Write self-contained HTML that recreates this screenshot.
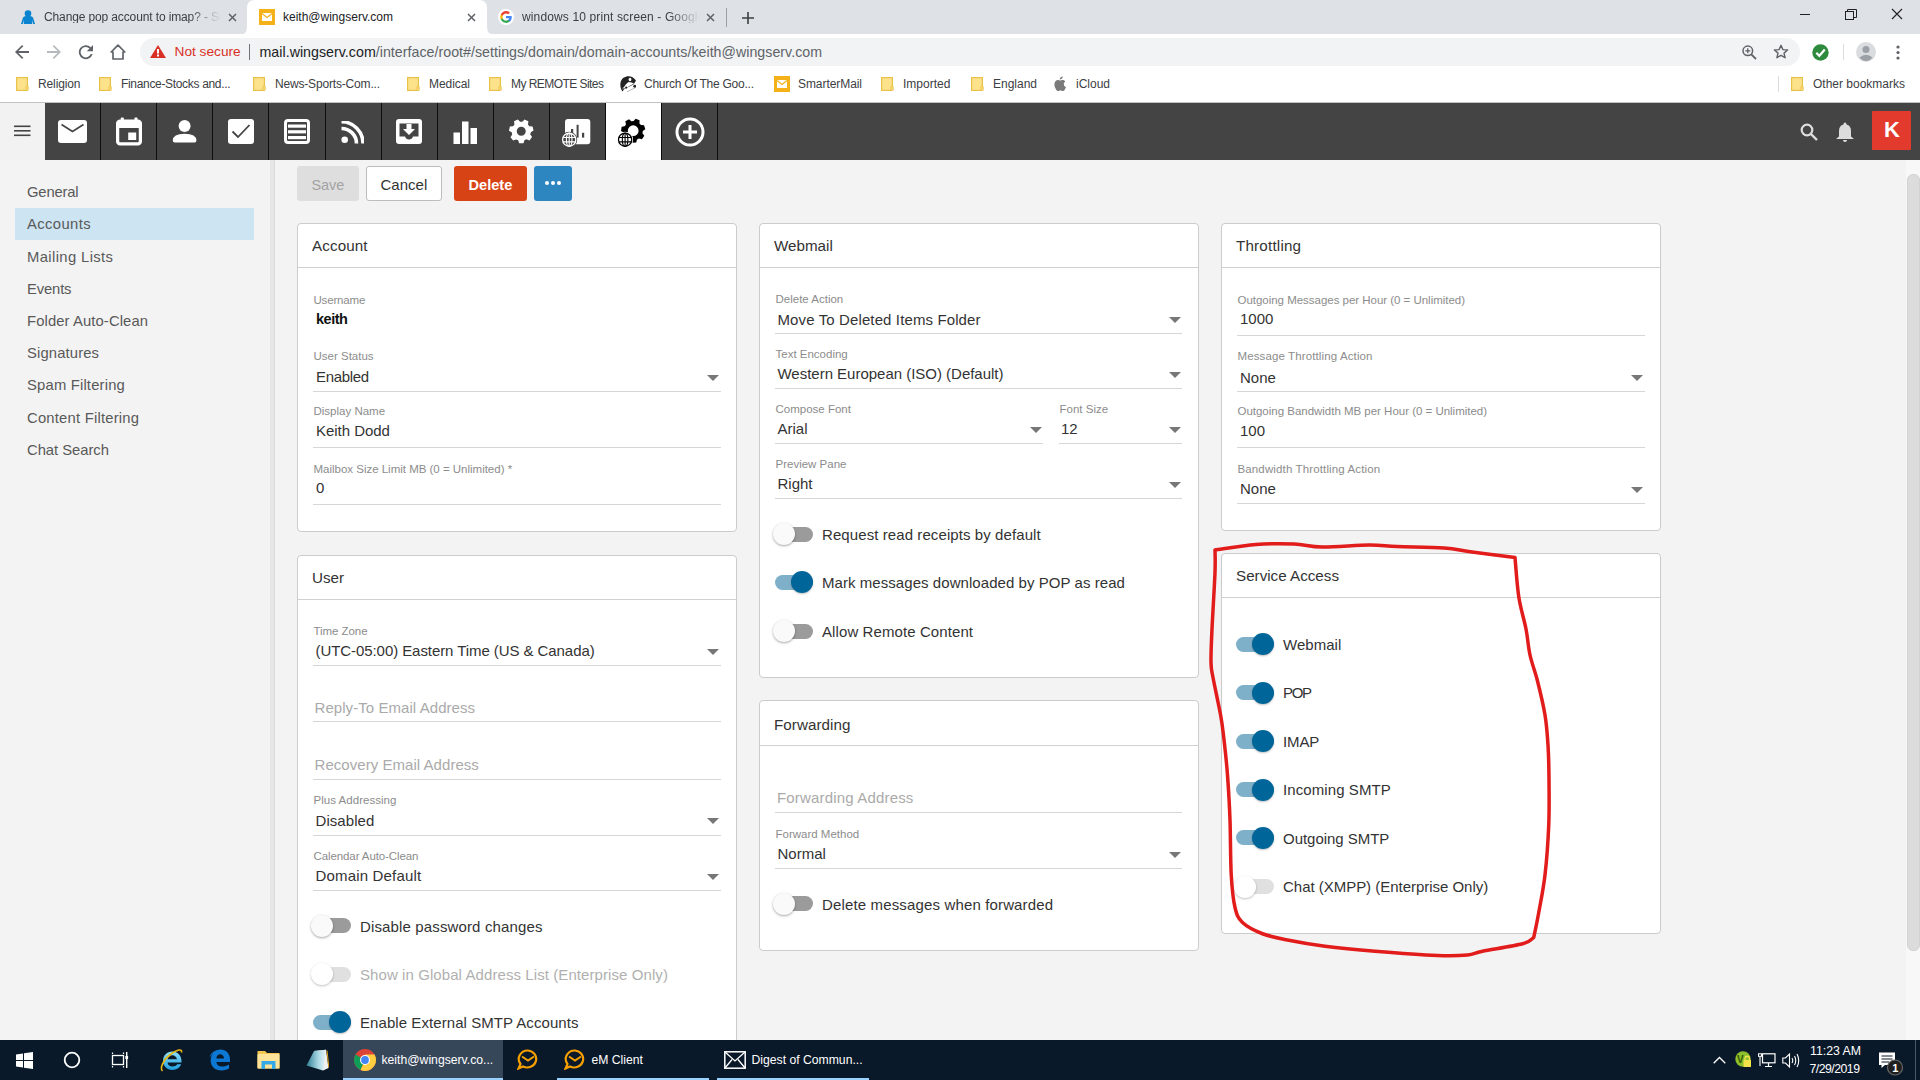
<!DOCTYPE html>
<html><head><meta charset="utf-8"><title>SmarterMail</title>
<style>
html,body{margin:0;padding:0;width:1920px;height:1080px;overflow:hidden;background:#fff}
body{position:relative;font-family:"Liberation Sans", sans-serif}
.t{position:absolute;line-height:1;white-space:nowrap;font-family:"Liberation Sans", sans-serif}
.r{position:absolute;display:block}
</style></head><body>
<div class="r" style="left:0px;top:0px;width:1920px;height:34px;background:#dee1e6"></div>
<svg class="r" style="left:239px;top:0" width="256" height="35" viewBox="0 0 256 35"><path d="M0 35 Q8 35 8 27 L8 8 Q8 0 16 0 L240 0 Q248 0 248 8 L248 27 Q248 35 256 35 Z" fill="#fff"/></svg>
<div class="r" style="left:0px;top:34px;width:1920px;height:68px;background:#fff"></div>
<svg class="r" style="left:20px;top:10px" width="16" height="14" viewBox="0 0 16 14"><circle cx="8" cy="3.5" r="3.3" fill="#0a84d0"/><path d="M1 14 L3 7.5 Q4 6 6 6 L10 6 Q12 6 13 7.5 L15 14 L13 14 L12 10 L12 14 L4 14 L4 10 L3 14Z" fill="#0a84d0"/></svg>
<div class="t" style="left:44px;top:10.84px;font-size:12px;color:#3c4043;font-weight:400;letter-spacing:-0.127px;width:177px;overflow:hidden;-webkit-mask-image:linear-gradient(90deg,#000 82%,transparent 100%)">Change pop account to imap? - Super User</div>
<svg class="r" style="left:228px;top:13px" width="9" height="9" viewBox="0 0 9 9"><path d="M1 1L8 8M8 1L1 8" stroke="#5f6368" stroke-width="1.5"/></svg>
<svg class="r" style="left:259px;top:9px" width="16" height="16" viewBox="0 0 16 16"><rect width="16" height="16" fill="#f5b11a"/><rect x="3" y="4" width="10" height="8" fill="#fff"/><path d="M3 4.5L8 8.5L13 4.5" stroke="#f5b11a" stroke-width="1.2" fill="none"/></svg>
<div class="t" style="left:283px;top:10.84px;font-size:12px;color:#202124;font-weight:400;">keith@wingserv.com</div>
<svg class="r" style="left:467px;top:13px" width="9" height="9" viewBox="0 0 9 9"><path d="M1 1L8 8M8 1L1 8" stroke="#5f6368" stroke-width="1.5"/></svg>
<svg class="r" style="left:498px;top:9px" width="16" height="16" viewBox="0 0 16 16"><circle cx="8" cy="8" r="8" fill="#fff"/><g transform="translate(1.85 1.85) scale(0.82)"><path d="M14.5 7.7c0-.5 0-1-.1-1.4H7.5v2.7h3.9c-.2.9-.7 1.7-1.4 2.2v1.8h2.3c1.4-1.3 2.2-3.1 2.2-5.3z" fill="#4285f4"/><path d="M7.5 14.7c1.9 0 3.5-.6 4.7-1.7L9.9 11.2c-.6.4-1.4.7-2.4.7-1.9 0-3.4-1.3-4-3H1.2v1.8c1.2 2.4 3.6 4 6.3 4z" fill="#34a853"/><path d="M3.5 8.9c-.2-.4-.2-.9-.2-1.4s.1-1 .2-1.4V4.3H1.2C.7 5.3.4 6.4.4 7.5s.3 2.2.8 3.2l2.3-1.8z" fill="#fbbc05"/><path d="M7.5 3.1c1.1 0 2 .4 2.8 1.1l2-2C11 .9 9.4.3 7.5.3 4.8.3 2.4 1.9 1.2 4.3l2.3 1.8c.6-1.8 2.1-3 4-3z" fill="#ea4335"/></g></svg>
<div class="t" style="left:522px;top:10.84px;font-size:12px;color:#3c4043;font-weight:400;letter-spacing:0.134px;width:178px;overflow:hidden;-webkit-mask-image:linear-gradient(90deg,#000 82%,transparent 100%)">windows 10 print screen - Google Search</div>
<svg class="r" style="left:706px;top:13px" width="9" height="9" viewBox="0 0 9 9"><path d="M1 1L8 8M8 1L1 8" stroke="#5f6368" stroke-width="1.5"/></svg>
<div class="r" style="left:726px;top:8px;width:1px;height:19px;background:#9aa0a6"></div>
<svg class="r" style="left:742px;top:12px" width="12" height="12" viewBox="0 0 12 12"><path d="M6 0V12M0 6H12" stroke="#3c4043" stroke-width="1.6"/></svg>
<div class="r" style="left:1800px;top:14px;width:10px;height:1px;background:#202124"></div>
<svg class="r" style="left:1845px;top:9px" width="12" height="11" viewBox="0 0 12 11"><rect x="0.5" y="2.5" width="8" height="8" fill="none" stroke="#202124"/><path d="M2.5 2.5V0.5H11.5V8.5H8.5" fill="none" stroke="#202124"/></svg>
<svg class="r" style="left:1891px;top:8px" width="12" height="12" viewBox="0 0 12 12"><path d="M1 1L11 11M11 1L1 11" stroke="#202124" stroke-width="1.1"/></svg>
<svg class="r" style="left:15px;top:45px" width="14" height="14" viewBox="0 0 14 14"><path d="M14 6.1H3.4L8.3 1.2 7.1 0 0 7l7.1 7 1.2-1.2-4.9-4.9H14z" fill="#5f6368"/></svg>
<svg class="r" style="left:47px;top:45px" width="14" height="14" viewBox="0 0 14 14"><path d="M0 6.1h10.6L5.7 1.2 6.9 0 14 7l-7.1 7-1.2-1.2 4.9-4.9H0z" fill="#b6b9bd"/></svg>
<svg class="r" style="left:78px;top:45px" width="15" height="15" viewBox="0 0 15 15"><path d="M12.8 2.2A7 7 0 1 0 14.6 9h-1.9A5.2 5.2 0 1 1 11.5 3.5L8.8 6.2H15V0z" fill="#5f6368"/></svg>
<svg class="r" style="left:110px;top:44px" width="16" height="16" viewBox="0 0 16 16"><path d="M8 1.2L1.2 8H3V15H13V8H14.8Z" fill="none" stroke="#5f6368" stroke-width="1.7" stroke-linejoin="round"/></svg>
<div class="r" style="left:140px;top:38px;width:1660px;height:28px;background:#f1f3f4;border-radius:14px"></div>
<svg class="r" style="left:150px;top:45px" width="16" height="13" viewBox="0 0 16 13"><path d="M8 0L16 13H0Z" fill="#d93025"/><rect x="7" y="4" width="2" height="4.5" fill="#fff"/><rect x="7" y="9.5" width="2" height="2" fill="#fff"/></svg>
<div class="t" style="left:174.5px;top:45.40px;font-size:13.7px;color:#d93025;font-weight:400;">Not secure</div>
<div class="r" style="left:249px;top:44px;width:1px;height:16px;background:#6f7378"></div>
<div class="t" style="left:259.5px;top:44.98px;font-size:14.2px;color:#5f6368;font-weight:400;letter-spacing:0.036px;"><span style="color:#202124">mail.wingserv.com</span>/interface/root#/settings/domain/domain-accounts/keith@wingserv.com</div>
<svg class="r" style="left:1742px;top:45px" width="15" height="15" viewBox="0 0 15 15"><circle cx="5.8" cy="5.8" r="4.8" fill="none" stroke="#5f6368" stroke-width="1.5"/><path d="M9.3 9.3L14 14" stroke="#5f6368" stroke-width="1.8"/><path d="M5.8 3.3V8.3M3.3 5.8H8.3" stroke="#5f6368" stroke-width="1.3"/></svg>
<svg class="r" style="left:1773px;top:44px" width="16" height="16" viewBox="0 0 16 16"><path d="M8 1.3l1.9 4.3 4.7.4-3.6 3.1 1.1 4.6L8 11.3l-4.1 2.4L5 9.1 1.4 6l4.7-.4z" fill="none" stroke="#5f6368" stroke-width="1.4" stroke-linejoin="round"/></svg>
<svg class="r" style="left:1812px;top:44px" width="17" height="17" viewBox="0 0 17 17"><circle cx="8.5" cy="8.5" r="8.2" fill="#2e8b3e"/><path d="M4.3 8.8L7.3 11.8L12.8 5.5" fill="none" stroke="#fff" stroke-width="2.2"/></svg>
<div class="r" style="left:1843px;top:44px;width:1px;height:16px;background:#dadce0"></div>
<svg class="r" style="left:1856px;top:42px" width="20" height="20" viewBox="0 0 20 20"><circle cx="10" cy="10" r="10" fill="#dadce0"/><circle cx="10" cy="7.5" r="3.5" fill="#9aa0a6"/><path d="M3.5 15.5Q10 10 16.5 15.5Q13.5 19 10 19Q6.5 19 3.5 15.5Z" fill="#9aa0a6"/></svg>
<svg class="r" style="left:1896px;top:45px" width="4" height="15" viewBox="0 0 4 15"><circle cx="2" cy="2" r="1.6" fill="#5f6368"/><circle cx="2" cy="7.5" r="1.6" fill="#5f6368"/><circle cx="2" cy="13" r="1.6" fill="#5f6368"/></svg>
<svg class="r" style="left:16px;top:77px" width="13" height="15" viewBox="0 0 13 15"><rect x="0.6" y="0.6" width="10.8" height="12.8" fill="#fde28c" stroke="#e9c24a" stroke-width="1.2"/><rect x="10" y="9.2" width="2.2" height="4.2" rx="0.6" fill="#fde28c" stroke="#e9c24a" stroke-width="1"/></svg>
<div class="t" style="left:38px;top:77.84px;font-size:12px;color:#3c4043;font-weight:400;letter-spacing:-0.126px;">Religion</div>
<svg class="r" style="left:99px;top:77px" width="13" height="15" viewBox="0 0 13 15"><rect x="0.6" y="0.6" width="10.8" height="12.8" fill="#fde28c" stroke="#e9c24a" stroke-width="1.2"/><rect x="10" y="9.2" width="2.2" height="4.2" rx="0.6" fill="#fde28c" stroke="#e9c24a" stroke-width="1"/></svg>
<div class="t" style="left:121px;top:77.84px;font-size:12px;color:#3c4043;font-weight:400;letter-spacing:-0.327px;">Finance-Stocks and...</div>
<svg class="r" style="left:253px;top:77px" width="13" height="15" viewBox="0 0 13 15"><rect x="0.6" y="0.6" width="10.8" height="12.8" fill="#fde28c" stroke="#e9c24a" stroke-width="1.2"/><rect x="10" y="9.2" width="2.2" height="4.2" rx="0.6" fill="#fde28c" stroke="#e9c24a" stroke-width="1"/></svg>
<div class="t" style="left:275px;top:77.84px;font-size:12px;color:#3c4043;font-weight:400;letter-spacing:-0.176px;">News-Sports-Com...</div>
<svg class="r" style="left:407px;top:77px" width="13" height="15" viewBox="0 0 13 15"><rect x="0.6" y="0.6" width="10.8" height="12.8" fill="#fde28c" stroke="#e9c24a" stroke-width="1.2"/><rect x="10" y="9.2" width="2.2" height="4.2" rx="0.6" fill="#fde28c" stroke="#e9c24a" stroke-width="1"/></svg>
<div class="t" style="left:429px;top:77.84px;font-size:12px;color:#3c4043;font-weight:400;letter-spacing:-0.057px;">Medical</div>
<svg class="r" style="left:489px;top:77px" width="13" height="15" viewBox="0 0 13 15"><rect x="0.6" y="0.6" width="10.8" height="12.8" fill="#fde28c" stroke="#e9c24a" stroke-width="1.2"/><rect x="10" y="9.2" width="2.2" height="4.2" rx="0.6" fill="#fde28c" stroke="#e9c24a" stroke-width="1"/></svg>
<div class="t" style="left:511px;top:77.84px;font-size:12px;color:#3c4043;font-weight:400;letter-spacing:-0.549px;">My REMOTE Sites</div>
<svg class="r" style="left:620px;top:76px" width="16" height="16" viewBox="0 0 16 16"><path d="M2.4 15.6C-0.6 11 -0.4 4.5 3.5 1.8C7 -0.8 13 -0.5 16 4.6L13.8 8.2Q10 10.2 6.5 11.8Q4 13 2.4 15.6Z" fill="#222"/><ellipse cx="10" cy="3.5" rx="1.4" ry="1.8" fill="#fff"/><path d="M8.5 6Q12 6 14 7.6Q9.5 10.2 5.5 12.2Q3.6 13 3.8 11.2Q5.5 8 8.5 6Z" fill="#fff"/><circle cx="14.8" cy="10.2" r="1.5" fill="#222"/><circle cx="6.2" cy="11.6" r="1.1" fill="#222"/><path d="M3 13.5Q2.8 11 4.5 11" stroke="#ccc" stroke-width="0.8" fill="none"/><path d="M7 16Q11 13.5 15 12" stroke="#999" stroke-width="0.7" fill="none"/></svg>
<div class="t" style="left:644px;top:77.84px;font-size:12px;color:#3c4043;font-weight:400;letter-spacing:-0.236px;">Church Of The Goo...</div>
<svg class="r" style="left:774px;top:76px" width="16" height="16" viewBox="0 0 16 16"><rect width="16" height="16" fill="#f5b11a"/><rect x="3" y="4" width="10" height="8" fill="#fff"/><path d="M3 4.5L8 8.5L13 4.5" stroke="#f5b11a" stroke-width="1.2" fill="none"/></svg>
<div class="t" style="left:798px;top:77.84px;font-size:12px;color:#3c4043;font-weight:400;letter-spacing:-0.068px;">SmarterMail</div>
<svg class="r" style="left:881px;top:77px" width="13" height="15" viewBox="0 0 13 15"><rect x="0.6" y="0.6" width="10.8" height="12.8" fill="#fde28c" stroke="#e9c24a" stroke-width="1.2"/><rect x="10" y="9.2" width="2.2" height="4.2" rx="0.6" fill="#fde28c" stroke="#e9c24a" stroke-width="1"/></svg>
<div class="t" style="left:903px;top:77.84px;font-size:12px;color:#3c4043;font-weight:400;">Imported</div>
<svg class="r" style="left:971px;top:77px" width="13" height="15" viewBox="0 0 13 15"><rect x="0.6" y="0.6" width="10.8" height="12.8" fill="#fde28c" stroke="#e9c24a" stroke-width="1.2"/><rect x="10" y="9.2" width="2.2" height="4.2" rx="0.6" fill="#fde28c" stroke="#e9c24a" stroke-width="1"/></svg>
<div class="t" style="left:993px;top:77.84px;font-size:12px;color:#3c4043;font-weight:400;">England</div>
<svg class="r" style="left:1054px;top:76px" width="12" height="15" viewBox="0 0 12 15"><path d="M9.8 8c0-1.7 1.4-2.5 1.5-2.6-.8-1.2-2.1-1.4-2.5-1.4-1.1-.1-2.1.6-2.6.6-.6 0-1.4-.6-2.3-.6C2.7 4.1 1.600 4.800 1 5.900c-1.300 2.200-.3 5.500.9 7.300.6.900 1.300 1.800 2.300 1.800.9 0 1.200-.6 2.300-.6 1.100 0 1.400.6 2.300.6 1 0 1.600-.9 2.200-1.800.7-1 1-2 1-2.100-.1 0-2.200-.8-2.200-3.100zM8 2.600c.5-.6.800-1.400.7-2.200-.7 0-1.600.5-2.100 1.100-.5.500-.9 1.300-.8 2.100.8.100 1.600-.4 2.200-1z" fill="#7a7a7a"/></svg>
<div class="t" style="left:1076px;top:77.84px;font-size:12px;color:#3c4043;font-weight:400;">iCloud</div>
<div class="r" style="left:1778px;top:76px;width:1px;height:16px;background:#dadce0"></div>
<svg class="r" style="left:1791px;top:77px" width="13" height="15" viewBox="0 0 13 15"><rect x="0.6" y="0.6" width="10.8" height="12.8" fill="#fde28c" stroke="#e9c24a" stroke-width="1.2"/><rect x="10" y="9.2" width="2.2" height="4.2" rx="0.6" fill="#fde28c" stroke="#e9c24a" stroke-width="1"/></svg>
<div class="t" style="left:1813px;top:77.84px;font-size:12px;color:#3c4043;font-weight:400;letter-spacing:-0.003px;">Other bookmarks</div>
<div class="r" style="left:0px;top:102px;width:1920px;height:1px;background:#c2c2c2"></div>
<div class="r" style="left:0px;top:103px;width:45px;height:57px;background:#f2f2f2"></div>
<svg class="r" style="left:14px;top:125px" width="17" height="12" viewBox="0 0 17 12"><rect y="0.5" width="16.5" height="1.6" fill="#444"/><rect y="5" width="16.5" height="1.6" fill="#444"/><rect y="9.5" width="16.5" height="1.6" fill="#444"/></svg>
<div class="r" style="left:45px;top:103px;width:1875px;height:57px;background:#444"></div>
<div class="r" style="left:100px;top:103px;width:1px;height:57px;background:#0d0d0d"></div>
<div class="r" style="left:156px;top:103px;width:1px;height:57px;background:#0d0d0d"></div>
<div class="r" style="left:212px;top:103px;width:1px;height:57px;background:#0d0d0d"></div>
<div class="r" style="left:268px;top:103px;width:1px;height:57px;background:#0d0d0d"></div>
<div class="r" style="left:325px;top:103px;width:1px;height:57px;background:#0d0d0d"></div>
<div class="r" style="left:381px;top:103px;width:1px;height:57px;background:#0d0d0d"></div>
<div class="r" style="left:437px;top:103px;width:1px;height:57px;background:#0d0d0d"></div>
<div class="r" style="left:493px;top:103px;width:1px;height:57px;background:#0d0d0d"></div>
<div class="r" style="left:549px;top:103px;width:1px;height:57px;background:#0d0d0d"></div>
<div class="r" style="left:605px;top:103px;width:1px;height:57px;background:#0d0d0d"></div>
<div class="r" style="left:661px;top:103px;width:1px;height:57px;background:#0d0d0d"></div>
<div class="r" style="left:717px;top:103px;width:1px;height:57px;background:#0d0d0d"></div>
<div class="r" style="left:606px;top:103px;width:55px;height:57px;background:#fff"></div>
<svg class="r" style="left:58px;top:120px" width="29" height="23" viewBox="0 0 29 23"><rect x="0" y="0" width="29" height="23" rx="3" fill="#fff"/><path d="M3.5 4.5L14.5 11.5L25.5 4.5" fill="none" stroke="#444" stroke-width="1.6"/></svg>
<svg class="r" style="left:116px;top:117px" width="26" height="29" viewBox="0 0 26 29"><rect x="1.6" y="4.2" width="22.8" height="22.6" rx="2.5" fill="none" stroke="#fff" stroke-width="3.3"/><rect x="1.6" y="4.2" width="22.8" height="6.8" fill="#fff"/><rect x="4.8" y="0.5" width="3" height="5" rx="0.8" fill="#fff"/><rect x="18.5" y="0.5" width="3" height="5" rx="0.8" fill="#fff"/><rect x="12.2" y="15.5" width="8" height="7.5" fill="#fff"/></svg>
<svg class="r" style="left:172px;top:119px" width="25" height="25" viewBox="0 0 25 25"><circle cx="12.6" cy="7" r="6" fill="#fff"/><path d="M0.8 21.5Q0.8 14.8 12.6 14.7Q24.4 14.8 24.4 21.5Q24.4 23.6 22.5 23.6H2.7Q0.8 23.6 0.8 21.5Z" fill="#fff"/></svg>
<svg class="r" style="left:228px;top:119px" width="26" height="25" viewBox="0 0 26 25"><rect width="26" height="25" rx="3" fill="#fff"/><path d="M4.5 12.5L10 18L21.5 6" fill="none" stroke="#444" stroke-width="1.8"/></svg>
<svg class="r" style="left:284px;top:119px" width="26" height="25" viewBox="0 0 26 25"><rect x="1.5" y="1.5" width="23" height="22" rx="2.5" fill="none" stroke="#fff" stroke-width="3"/><rect x="4" y="5.5" width="18" height="3.2" fill="#fff"/><rect x="4" y="11.2" width="18" height="3.2" fill="#fff"/><rect x="4" y="17" width="18" height="3.2" fill="#fff"/></svg>
<svg class="r" style="left:341px;top:121px" width="23" height="23" viewBox="0 0 23 23"><circle cx="3.7" cy="18.8" r="3.3" fill="#fff"/><path d="M0.5 7.5A15 15 0 0 1 15.5 22.5" fill="none" stroke="#fff" stroke-width="3.6"/><path d="M0.5 0.8A21.5 21.5 0 0 1 22 22.5" fill="none" stroke="#fff" stroke-width="3.6"/></svg>
<svg class="r" style="left:396px;top:119px" width="26" height="25" viewBox="0 0 26 25"><rect width="26" height="25" rx="3" fill="#fff"/><path d="M3.5 4.5H22.5V17.5H17Q16 20.5 13 20.5Q10 20.5 9 17.5H3.5Z" fill="#444"/><path d="M10.5 5H15.5V10H19L13 16L7 10H10.5Z" fill="#fff"/></svg>
<svg class="r" style="left:453px;top:121px" width="25" height="23" viewBox="0 0 25 23"><rect x="0.5" y="11.5" width="6.5" height="11.5" fill="#fff"/><rect x="9" y="0.5" width="6.5" height="22.5" fill="#fff"/><rect x="17.5" y="7" width="6.5" height="16" fill="#fff"/></svg>
<svg class="r" style="left:506px;top:116px" width="31" height="31" viewBox="0 0 31 31"><path fill-rule="evenodd" d="M8.46 8.46 L8.02 5.30 L11.86 3.43 L14.08 5.72 L16.32 5.71 L18.52 3.39 L22.38 5.23 L21.97 8.39 L23.38 10.14 L26.56 10.42 L27.53 14.58 L24.80 16.23 L24.31 18.42 L26.08 21.08 L23.43 24.43 L20.44 23.33 L18.42 24.31 L17.45 27.35 L13.17 27.37 L12.17 24.34 L10.14 23.38 L7.16 24.51 L4.48 21.19 L6.22 18.51 L5.71 16.32 L2.96 14.70 L3.89 10.53 L7.07 10.22ZM19.75 15.25A4.5 4.5 0 1 0 10.75 15.25A4.5 4.5 0 1 0 19.75 15.25Z" fill="#fff"/></svg>
<svg class="r" style="left:560px;top:118px" width="32" height="30" viewBox="0 0 32 30"><rect x="5" y="1" width="25.3" height="25.3" rx="3" fill="#fff"/><rect x="11" y="11" width="2.2" height="8.6" fill="#444"/><rect x="16.6" y="6.8" width="2" height="12.8" fill="#444"/><rect x="22" y="14.8" width="2.2" height="4.8" fill="#444"/><circle cx="9.2" cy="21.7" r="8.0" fill="#444"/><circle cx="9.2" cy="21.7" r="6.6" fill="none" stroke="#fff" stroke-width="1.3"/><ellipse cx="9.2" cy="21.7" rx="2.772" ry="6.6" fill="none" stroke="#fff" stroke-width="1.1"/><path d="M3.1279999999999992 19.522H15.271999999999998M3.1279999999999992 23.878H15.271999999999998M9.2 15.1V28.299999999999997" stroke="#fff" stroke-width="1.1"/></svg>
<svg class="r" style="left:614px;top:114px" width="34" height="34" viewBox="0 0 34 34"><path fill-rule="evenodd" d="M11.95 10.40 L11.36 7.35 L15.03 5.24 L17.37 7.28 L19.61 7.11 L21.62 4.74 L25.56 6.29 L25.43 9.39 L26.95 11.04 L30.06 11.13 L31.31 15.18 L28.79 17.01 L28.46 19.23 L30.32 21.72 L27.93 25.22 L24.94 24.40 L23.00 25.52 L22.21 28.52 L17.99 28.84 L16.76 25.99 L14.67 25.17 L11.83 26.43 L8.95 23.32 L10.42 20.58 L9.76 18.44 L7.00 17.00 L7.64 12.81 L10.69 12.26ZM24.60 16.70A5.4 5.4 0 1 0 13.80 16.70A5.4 5.4 0 1 0 24.60 16.70Z" fill="#000"/><circle cx="11.1" cy="25.7" r="8.0" fill="#fff"/><circle cx="11.1" cy="25.7" r="6.6" fill="none" stroke="#000" stroke-width="1.3"/><ellipse cx="11.1" cy="25.7" rx="2.772" ry="6.6" fill="none" stroke="#000" stroke-width="1.1"/><path d="M5.028 23.522H17.172M5.028 27.878H17.172M11.1 19.1V32.3" stroke="#000" stroke-width="1.1"/></svg>
<svg class="r" style="left:675px;top:117px" width="30" height="30" viewBox="0 0 30 30"><circle cx="15" cy="15" r="13" fill="none" stroke="#fff" stroke-width="3"/><path d="M15 8V22M8 15H22" stroke="#fff" stroke-width="3"/></svg>
<svg class="r" style="left:1800px;top:123px" width="18" height="18" viewBox="0 0 18 18"><circle cx="7" cy="7" r="5.3" fill="none" stroke="#ddd" stroke-width="2.2"/><path d="M10.8 10.8L17 17" stroke="#ddd" stroke-width="2.4"/></svg>
<svg class="r" style="left:1836px;top:122px" width="18" height="20" viewBox="0 0 18 20"><path d="M9 0.5Q10.5 0.5 10.5 2.5Q15 3.5 15 9V14.5L17.5 16.5V17H0.5V16.5L3 14.5V9Q3 3.5 7.5 2.5Q7.5 0.5 9 0.5Z" fill="#ddd"/><path d="M7 18H11Q11 20 9 20Q7 20 7 18Z" fill="#ddd"/></svg>
<div class="r" style="left:1872px;top:111px;width:39px;height:39px;background:#e23b2e;border-radius:1px"></div>
<div class="t" style="left:1884px;top:119.38px;font-size:22px;color:#fff;font-weight:700;">K</div>
<div class="r" style="left:0px;top:160px;width:1920px;height:880px;background:#f3f3f3"></div>
<div class="r" style="left:270px;top:160px;width:4px;height:880px;background:#e6e6e6"></div>
<div class="r" style="left:274px;top:160px;width:1px;height:880px;background:#d9d9d9"></div>
<div class="r" style="left:1906px;top:160px;width:14px;height:880px;background:#f8f8f8"></div>
<div class="r" style="left:1907px;top:174px;width:13px;height:777px;background:#dcdcdc;border-radius:6px;border:1px solid #d2d2d2;box-sizing:border-box"></div>
<div class="r" style="left:15px;top:208px;width:239px;height:32px;background:#cde4f2"></div>
<div class="t" style="left:27px;top:185.07px;font-size:14.8px;color:#595959;font-weight:400;letter-spacing:-0.181px;">General</div>
<div class="t" style="left:27px;top:217.07px;font-size:14.8px;color:#595959;font-weight:400;letter-spacing:0.400px;">Accounts</div>
<div class="t" style="left:27px;top:250.07px;font-size:14.8px;color:#595959;font-weight:400;letter-spacing:0.383px;">Mailing Lists</div>
<div class="t" style="left:27px;top:282.07px;font-size:14.8px;color:#595959;font-weight:400;letter-spacing:-0.143px;">Events</div>
<div class="t" style="left:27px;top:314.07px;font-size:14.8px;color:#595959;font-weight:400;letter-spacing:0.107px;">Folder Auto-Clean</div>
<div class="t" style="left:27px;top:346.07px;font-size:14.8px;color:#595959;font-weight:400;letter-spacing:0.140px;">Signatures</div>
<div class="t" style="left:27px;top:378.07px;font-size:14.8px;color:#595959;font-weight:400;letter-spacing:0.186px;">Spam Filtering</div>
<div class="t" style="left:27px;top:410.57px;font-size:14.8px;color:#595959;font-weight:400;letter-spacing:0.215px;">Content Filtering</div>
<div class="t" style="left:27px;top:443.07px;font-size:14.8px;color:#595959;font-weight:400;letter-spacing:-0.029px;">Chat Search</div>
<div class="r" style="left:297px;top:166px;width:62px;height:35px;background:#dedede;border-radius:3px"></div>
<div class="t" style="left:311.5px;top:177.73px;font-size:14.5px;color:#a3a3a3;font-weight:400;letter-spacing:-0.087px;">Save</div>
<div class="r" style="left:366px;top:166px;width:76px;height:35px;background:#fff;border:1px solid #bdbdbd;border-radius:3px;box-sizing:border-box"></div>
<div class="t" style="left:380.5px;top:177.30px;font-size:15px;color:#333;font-weight:400;letter-spacing:0.015px;">Cancel</div>
<div class="r" style="left:454px;top:166px;width:73px;height:35px;background:#d84315;border-radius:3px"></div>
<div class="t" style="left:468.5px;top:177.64px;font-size:14.6px;color:#fff;font-weight:700;letter-spacing:-0.010px;">Delete</div>
<div class="r" style="left:534px;top:166px;width:38px;height:35px;background:#2e86c1;border-radius:3px"></div>
<div class="r" style="left:544.5px;top:181.3px;width:4.2px;height:4.2px;background:#fff;border-radius:50%"></div>
<div class="r" style="left:550.5px;top:181.3px;width:4.2px;height:4.2px;background:#fff;border-radius:50%"></div>
<div class="r" style="left:556.5px;top:181.3px;width:4.2px;height:4.2px;background:#fff;border-radius:50%"></div>
<div class="r" style="left:297px;top:223px;width:440px;height:309px;background:#fff;border:1px solid #cbcbcb;border-radius:4px;box-sizing:border-box"></div>
<div class="r" style="left:298px;top:267px;width:438px;height:1px;background:#d0d0d0"></div>
<div class="t" style="left:312px;top:238.13px;font-size:15.2px;color:#333;font-weight:400;letter-spacing:0.109px;">Account</div>
<div class="t" style="left:313.5px;top:294.57px;font-size:11.5px;color:#8c8c8c;font-weight:400;letter-spacing:-0.182px;">Username</div>
<div class="t" style="left:316px;top:311.73px;font-size:14.5px;color:#111;font-weight:700;letter-spacing:-0.489px;">keith</div>
<div class="t" style="left:313.5px;top:351.27px;font-size:11.5px;color:#8c8c8c;font-weight:400;">User Status</div>
<div class="t" style="left:316px;top:369.30px;font-size:15px;color:#333;font-weight:400;letter-spacing:-0.342px;">Enabled</div>
<svg class="r" style="left:707px;top:374.5px" width="12" height="6" viewBox="0 0 12 6"><path d="M0 0H12L6 6Z" fill="#777"/></svg>
<div class="r" style="left:313px;top:391px;width:408px;height:1px;background:#d6d6d6"></div>
<div class="t" style="left:313.5px;top:406.47px;font-size:11.5px;color:#8c8c8c;font-weight:400;">Display Name</div>
<div class="t" style="left:316px;top:423.30px;font-size:15px;color:#333;font-weight:400;letter-spacing:-0.028px;">Keith Dodd</div>
<div class="r" style="left:313px;top:447px;width:408px;height:1px;background:#d6d6d6"></div>
<div class="t" style="left:313.5px;top:463.67px;font-size:11.5px;color:#8c8c8c;font-weight:400;letter-spacing:-0.012px;">Mailbox Size Limit MB (0 = Unlimited) *</div>
<div class="t" style="left:316px;top:479.90px;font-size:15px;color:#333;font-weight:400;">0</div>
<div class="r" style="left:313px;top:504px;width:408px;height:1px;background:#d6d6d6"></div>
<div class="r" style="left:297px;top:555px;width:440px;height:500px;background:#fff;border:1px solid #cbcbcb;border-radius:4px;box-sizing:border-box"></div>
<div class="r" style="left:298px;top:599px;width:438px;height:1px;background:#d0d0d0"></div>
<div class="t" style="left:312px;top:569.73px;font-size:15.2px;color:#333;font-weight:400;">User</div>
<div class="t" style="left:313.5px;top:626.07px;font-size:11.5px;color:#8c8c8c;font-weight:400;letter-spacing:-0.064px;">Time Zone</div>
<div class="t" style="left:315.5px;top:643.00px;font-size:15px;color:#333;font-weight:400;letter-spacing:-0.070px;">(UTC-05:00) Eastern Time (US &amp; Canada)</div>
<svg class="r" style="left:707px;top:649px" width="12" height="6" viewBox="0 0 12 6"><path d="M0 0H12L6 6Z" fill="#777"/></svg>
<div class="r" style="left:313px;top:665px;width:408px;height:1px;background:#d6d6d6"></div>
<div class="t" style="left:314.5px;top:700.00px;font-size:15px;color:#aaa;font-weight:400;letter-spacing:0.065px;">Reply-To Email Address</div>
<div class="r" style="left:313px;top:721px;width:408px;height:1px;background:#d6d6d6"></div>
<div class="t" style="left:314.5px;top:757.30px;font-size:15px;color:#aaa;font-weight:400;letter-spacing:0.046px;">Recovery Email Address</div>
<div class="r" style="left:313px;top:779px;width:408px;height:1px;background:#d6d6d6"></div>
<div class="t" style="left:313.5px;top:795.07px;font-size:11.5px;color:#8c8c8c;font-weight:400;letter-spacing:0.032px;">Plus Addressing</div>
<div class="t" style="left:315.5px;top:812.90px;font-size:15px;color:#333;font-weight:400;letter-spacing:0.064px;">Disabled</div>
<svg class="r" style="left:707px;top:818px" width="12" height="6" viewBox="0 0 12 6"><path d="M0 0H12L6 6Z" fill="#777"/></svg>
<div class="r" style="left:313px;top:835px;width:408px;height:1px;background:#d6d6d6"></div>
<div class="t" style="left:313.5px;top:850.67px;font-size:11.5px;color:#8c8c8c;font-weight:400;letter-spacing:-0.099px;">Calendar Auto-Clean</div>
<div class="t" style="left:315.5px;top:868.00px;font-size:15px;color:#333;font-weight:400;letter-spacing:0.173px;">Domain Default</div>
<svg class="r" style="left:707px;top:873.5px" width="12" height="6" viewBox="0 0 12 6"><path d="M0 0H12L6 6Z" fill="#777"/></svg>
<div class="r" style="left:313px;top:890px;width:408px;height:1px;background:#d6d6d6"></div>
<div class="r" style="left:312.5px;top:918.1px;width:38px;height:15px;background:#9b9b9b;border-radius:7.5px"></div>
<div class="r" style="left:311px;top:914.6px;width:22px;height:22px;background:#fafafa;border-radius:50%;box-shadow:0 1px 2.5px rgba(0,0,0,.35)"></div>
<div class="t" style="left:360px;top:918.50px;font-size:15px;color:#333;font-weight:400;letter-spacing:0.137px;">Disable password changes</div>
<div class="r" style="left:312.5px;top:966.8px;width:38px;height:15px;background:#e0e0e0;border-radius:7.5px"></div>
<div class="r" style="left:311px;top:963.3px;width:22px;height:22px;background:#fff;border-radius:50%;box-shadow:0 1px 2.5px rgba(0,0,0,.25)"></div>
<div class="t" style="left:360px;top:967.20px;font-size:15px;color:#b0b0b0;font-weight:400;letter-spacing:0.082px;">Show in Global Address List (Enterprise Only)</div>
<div class="r" style="left:312.5px;top:1014.9px;width:38px;height:15px;background:#7fb0c9;border-radius:7.5px"></div>
<div class="r" style="left:328.8px;top:1011.4px;width:22px;height:22px;background:#00669a;border-radius:50%;box-shadow:0 1px 2px rgba(0,0,0,.25)"></div>
<div class="t" style="left:360px;top:1015.30px;font-size:15px;color:#333;font-weight:400;letter-spacing:0.071px;">Enable External SMTP Accounts</div>
<div class="r" style="left:759px;top:223px;width:440px;height:455px;background:#fff;border:1px solid #cbcbcb;border-radius:4px;box-sizing:border-box"></div>
<div class="r" style="left:760px;top:267px;width:438px;height:1px;background:#d0d0d0"></div>
<div class="t" style="left:774px;top:238.13px;font-size:15.2px;color:#333;font-weight:400;">Webmail</div>
<div class="t" style="left:775.5px;top:294.47px;font-size:11.5px;color:#8c8c8c;font-weight:400;">Delete Action</div>
<div class="t" style="left:777.5px;top:312.00px;font-size:15px;color:#333;font-weight:400;letter-spacing:0.119px;">Move To Deleted Items Folder</div>
<svg class="r" style="left:1169px;top:317px" width="12" height="6" viewBox="0 0 12 6"><path d="M0 0H12L6 6Z" fill="#777"/></svg>
<div class="r" style="left:775px;top:333px;width:407px;height:1px;background:#d6d6d6"></div>
<div class="t" style="left:775.5px;top:349.27px;font-size:11.5px;color:#8c8c8c;font-weight:400;">Text Encoding</div>
<div class="t" style="left:777.5px;top:366.30px;font-size:15px;color:#333;font-weight:400;letter-spacing:-0.016px;">Western European (ISO) (Default)</div>
<svg class="r" style="left:1169px;top:372px" width="12" height="6" viewBox="0 0 12 6"><path d="M0 0H12L6 6Z" fill="#777"/></svg>
<div class="r" style="left:775px;top:388px;width:407px;height:1px;background:#d6d6d6"></div>
<div class="t" style="left:775.5px;top:403.77px;font-size:11.5px;color:#8c8c8c;font-weight:400;">Compose Font</div>
<div class="t" style="left:777.5px;top:420.80px;font-size:15px;color:#333;font-weight:400;">Arial</div>
<svg class="r" style="left:1030px;top:427px" width="12" height="6" viewBox="0 0 12 6"><path d="M0 0H12L6 6Z" fill="#777"/></svg>
<div class="r" style="left:775px;top:443px;width:268px;height:1px;background:#d6d6d6"></div>
<div class="t" style="left:1059.5px;top:403.77px;font-size:11.5px;color:#8c8c8c;font-weight:400;">Font Size</div>
<div class="t" style="left:1061px;top:420.80px;font-size:15px;color:#333;font-weight:400;">12</div>
<svg class="r" style="left:1169px;top:427px" width="12" height="6" viewBox="0 0 12 6"><path d="M0 0H12L6 6Z" fill="#777"/></svg>
<div class="r" style="left:1059px;top:443px;width:123px;height:1px;background:#d6d6d6"></div>
<div class="t" style="left:775.5px;top:458.97px;font-size:11.5px;color:#8c8c8c;font-weight:400;">Preview Pane</div>
<div class="t" style="left:777.5px;top:476.00px;font-size:15px;color:#333;font-weight:400;">Right</div>
<svg class="r" style="left:1169px;top:482px" width="12" height="6" viewBox="0 0 12 6"><path d="M0 0H12L6 6Z" fill="#777"/></svg>
<div class="r" style="left:775px;top:498px;width:407px;height:1px;background:#d6d6d6"></div>
<div class="r" style="left:774.5px;top:526.9px;width:38px;height:15px;background:#9b9b9b;border-radius:7.5px"></div>
<div class="r" style="left:773px;top:523.4px;width:22px;height:22px;background:#fafafa;border-radius:50%;box-shadow:0 1px 2.5px rgba(0,0,0,.35)"></div>
<div class="t" style="left:822px;top:527.30px;font-size:15px;color:#333;font-weight:400;letter-spacing:0.087px;">Request read receipts by default</div>
<div class="r" style="left:774.5px;top:574.9px;width:38px;height:15px;background:#7fb0c9;border-radius:7.5px"></div>
<div class="r" style="left:790.8px;top:571.4px;width:22px;height:22px;background:#00669a;border-radius:50%;box-shadow:0 1px 2px rgba(0,0,0,.25)"></div>
<div class="t" style="left:822px;top:575.30px;font-size:15px;color:#333;font-weight:400;letter-spacing:0.059px;">Mark messages downloaded by POP as read</div>
<div class="r" style="left:774.5px;top:623.8px;width:38px;height:15px;background:#9b9b9b;border-radius:7.5px"></div>
<div class="r" style="left:773px;top:620.3px;width:22px;height:22px;background:#fafafa;border-radius:50%;box-shadow:0 1px 2.5px rgba(0,0,0,.35)"></div>
<div class="t" style="left:822px;top:624.20px;font-size:15px;color:#333;font-weight:400;letter-spacing:0.092px;">Allow Remote Content</div>
<div class="r" style="left:759px;top:700px;width:440px;height:251px;background:#fff;border:1px solid #cbcbcb;border-radius:4px;box-sizing:border-box"></div>
<div class="r" style="left:760px;top:745px;width:438px;height:1px;background:#d0d0d0"></div>
<div class="t" style="left:774px;top:716.53px;font-size:15.2px;color:#333;font-weight:400;letter-spacing:0.044px;">Forwarding</div>
<div class="t" style="left:777px;top:790.10px;font-size:15px;color:#aaa;font-weight:400;letter-spacing:0.175px;">Forwarding Address</div>
<div class="r" style="left:775px;top:812px;width:407px;height:1px;background:#d6d6d6"></div>
<div class="t" style="left:775.5px;top:828.57px;font-size:11.5px;color:#8c8c8c;font-weight:400;">Forward Method</div>
<div class="t" style="left:777.5px;top:846.30px;font-size:15px;color:#333;font-weight:400;">Normal</div>
<svg class="r" style="left:1169px;top:852px" width="12" height="6" viewBox="0 0 12 6"><path d="M0 0H12L6 6Z" fill="#777"/></svg>
<div class="r" style="left:775px;top:868px;width:407px;height:1px;background:#d6d6d6"></div>
<div class="r" style="left:774.5px;top:896.1px;width:38px;height:15px;background:#9b9b9b;border-radius:7.5px"></div>
<div class="r" style="left:773px;top:892.6px;width:22px;height:22px;background:#fafafa;border-radius:50%;box-shadow:0 1px 2.5px rgba(0,0,0,.35)"></div>
<div class="t" style="left:822px;top:896.50px;font-size:15px;color:#333;font-weight:400;letter-spacing:0.148px;">Delete messages when forwarded</div>
<div class="r" style="left:1221px;top:223px;width:440px;height:308px;background:#fff;border:1px solid #cbcbcb;border-radius:4px;box-sizing:border-box"></div>
<div class="r" style="left:1222px;top:267px;width:438px;height:1px;background:#d0d0d0"></div>
<div class="t" style="left:1236px;top:238.13px;font-size:15.2px;color:#333;font-weight:400;letter-spacing:0.191px;">Throttling</div>
<div class="t" style="left:1237.5px;top:294.77px;font-size:11.5px;color:#8c8c8c;font-weight:400;letter-spacing:-0.025px;">Outgoing Messages per Hour (0 = Unlimited)</div>
<div class="t" style="left:1240px;top:310.80px;font-size:15px;color:#333;font-weight:400;">1000</div>
<div class="r" style="left:1237px;top:335px;width:408px;height:1px;background:#d6d6d6"></div>
<div class="t" style="left:1237.5px;top:351.47px;font-size:11.5px;color:#8c8c8c;font-weight:400;letter-spacing:0.119px;">Message Throttling Action</div>
<div class="t" style="left:1240px;top:369.90px;font-size:15px;color:#333;font-weight:400;">None</div>
<svg class="r" style="left:1631px;top:374.5px" width="12" height="6" viewBox="0 0 12 6"><path d="M0 0H12L6 6Z" fill="#777"/></svg>
<div class="r" style="left:1237px;top:391px;width:408px;height:1px;background:#d6d6d6"></div>
<div class="t" style="left:1237.5px;top:406.47px;font-size:11.5px;color:#8c8c8c;font-weight:400;letter-spacing:-0.016px;">Outgoing Bandwidth MB per Hour (0 = Unlimited)</div>
<div class="t" style="left:1240px;top:423.30px;font-size:15px;color:#333;font-weight:400;">100</div>
<div class="r" style="left:1237px;top:447px;width:408px;height:1px;background:#d6d6d6"></div>
<div class="t" style="left:1237.5px;top:463.67px;font-size:11.5px;color:#8c8c8c;font-weight:400;letter-spacing:0.137px;">Bandwidth Throttling Action</div>
<div class="t" style="left:1240px;top:481.30px;font-size:15px;color:#333;font-weight:400;">None</div>
<svg class="r" style="left:1631px;top:486.5px" width="12" height="6" viewBox="0 0 12 6"><path d="M0 0H12L6 6Z" fill="#777"/></svg>
<div class="r" style="left:1237px;top:503px;width:408px;height:1px;background:#d6d6d6"></div>
<div class="r" style="left:1221px;top:553px;width:440px;height:381px;background:#fff;border:1px solid #cbcbcb;border-radius:4px;box-sizing:border-box"></div>
<div class="r" style="left:1222px;top:597px;width:438px;height:1px;background:#d0d0d0"></div>
<div class="t" style="left:1236px;top:568.13px;font-size:15.2px;color:#333;font-weight:400;letter-spacing:0.003px;">Service Access</div>
<div class="r" style="left:1235.5px;top:636.5px;width:38px;height:15px;background:#7fb0c9;border-radius:7.5px"></div>
<div class="r" style="left:1251.8px;top:633px;width:22px;height:22px;background:#00669a;border-radius:50%;box-shadow:0 1px 2px rgba(0,0,0,.25)"></div>
<div class="t" style="left:1283px;top:636.90px;font-size:15px;color:#333;font-weight:400;letter-spacing:0.042px;">Webmail</div>
<div class="r" style="left:1235.5px;top:685.0px;width:38px;height:15px;background:#7fb0c9;border-radius:7.5px"></div>
<div class="r" style="left:1251.8px;top:681.5px;width:22px;height:22px;background:#00669a;border-radius:50%;box-shadow:0 1px 2px rgba(0,0,0,.25)"></div>
<div class="t" style="left:1283px;top:685.40px;font-size:15px;color:#333;font-weight:400;letter-spacing:-1.325px;">POP</div>
<div class="r" style="left:1235.5px;top:733.5px;width:38px;height:15px;background:#7fb0c9;border-radius:7.5px"></div>
<div class="r" style="left:1251.8px;top:730px;width:22px;height:22px;background:#00669a;border-radius:50%;box-shadow:0 1px 2px rgba(0,0,0,.25)"></div>
<div class="t" style="left:1283px;top:733.90px;font-size:15px;color:#333;font-weight:400;letter-spacing:-0.125px;">IMAP</div>
<div class="r" style="left:1235.5px;top:782.0px;width:38px;height:15px;background:#7fb0c9;border-radius:7.5px"></div>
<div class="r" style="left:1251.8px;top:778.5px;width:22px;height:22px;background:#00669a;border-radius:50%;box-shadow:0 1px 2px rgba(0,0,0,.25)"></div>
<div class="t" style="left:1283px;top:782.40px;font-size:15px;color:#333;font-weight:400;letter-spacing:0.090px;">Incoming SMTP</div>
<div class="r" style="left:1235.5px;top:830.1px;width:38px;height:15px;background:#7fb0c9;border-radius:7.5px"></div>
<div class="r" style="left:1251.8px;top:826.6px;width:22px;height:22px;background:#00669a;border-radius:50%;box-shadow:0 1px 2px rgba(0,0,0,.25)"></div>
<div class="t" style="left:1283px;top:830.50px;font-size:15px;color:#333;font-weight:400;letter-spacing:-0.035px;">Outgoing SMTP</div>
<div class="r" style="left:1235.5px;top:879.0px;width:38px;height:15px;background:#e0e0e0;border-radius:7.5px"></div>
<div class="r" style="left:1234px;top:875.5px;width:22px;height:22px;background:#fff;border-radius:50%;box-shadow:0 1px 2.5px rgba(0,0,0,.25)"></div>
<div class="t" style="left:1283px;top:879.40px;font-size:15px;color:#333;font-weight:400;letter-spacing:-0.024px;">Chat (XMPP) (Enterprise Only)</div>
<svg class="r" style="left:0;top:0" width="1920" height="1080"><path d="M1215,550 C1221.8,549.1 1242.8,545.5 1256,544.5 C1269.2,543.5 1283.0,543.6 1294,544 C1305.0,544.4 1309.5,546.8 1322,547 C1334.5,547.2 1356.5,545.1 1369,545 C1381.5,544.9 1384.5,546.0 1397,546.5 C1409.5,547.0 1431.5,547.1 1444,548 C1456.5,548.9 1460.2,550.4 1472,552 C1483.8,553.6 1507.8,556.6 1515,557.5 L1515,557.5 C1515.6,564.1 1517.0,585.1 1518.8,597 C1520.6,608.9 1524.1,619.3 1526,629 C1527.9,638.7 1528.1,646.3 1530,655 C1531.9,663.7 1535.0,671.0 1537.5,681 C1540.0,691.0 1543.2,704.3 1545,715 C1546.8,725.7 1547.3,734.2 1548,745 C1548.7,755.8 1548.9,766.7 1549,780 C1549.1,793.3 1549.4,809.2 1548.75,825 C1548.1,840.8 1546.7,860.4 1545,875 C1543.3,889.6 1540.6,902.1 1538.75,912.5 C1536.9,922.9 1534.6,933.3 1533.75,937.5 L1533.75,937.5 C1531.9,938.5 1531.0,941.5 1522.5,943.75 C1514.0,946.0 1491.7,949.4 1482.5,951.25 C1473.3,953.1 1475.0,954.3 1467.5,955 C1460.0,955.7 1452.9,956.1 1437.5,955.5 C1422.1,954.9 1393.8,952.8 1375,951.25 C1356.2,949.7 1339.6,948.1 1325,946.25 C1310.4,944.4 1297.9,942.1 1287.5,940 C1277.1,937.9 1270.0,936.7 1262.5,933.75 C1255.0,930.8 1247.1,926.9 1242.5,922.5 C1237.9,918.1 1236.9,915.4 1235,907.5 C1233.1,899.6 1232.1,889.6 1231.25,875 C1230.4,860.4 1230.6,836.7 1230,820 C1229.4,803.3 1228.5,788.8 1227.5,775 C1226.5,761.2 1224.9,747.5 1223.75,737.5 C1222.6,727.5 1222.4,725.0 1220.6,715 C1218.8,705.0 1214.6,686.2 1213,677.5 C1211.4,668.8 1211.2,670.6 1211,662.5 C1210.8,654.4 1211.3,644.0 1212,629 C1212.7,614.0 1214.5,585.7 1215,572.5 C1215.5,559.3 1215.0,553.8 1215,550" fill="none" stroke="#e21b1b" stroke-width="3.5" stroke-linecap="round" stroke-linejoin="round"/></svg>
<div class="r" style="left:0px;top:1040px;width:1920px;height:40px;background:#0a1929"></div>
<svg class="r" style="left:16px;top:1052px" width="17" height="17" viewBox="0 0 17 17"><path d="M0 2.4L7 1.4V7.9H0ZM8 1.2L17 0V7.9H8ZM0 9H7V15.5L0 14.5ZM8 9H17V17L8 15.7Z" fill="#fff"/></svg>
<svg class="r" style="left:63px;top:1051px" width="18" height="18" viewBox="0 0 18 18"><circle cx="9" cy="9" r="7.3" fill="none" stroke="#fff" stroke-width="1.8"/></svg>
<svg class="r" style="left:111px;top:1052px" width="18" height="16" viewBox="0 0 18 16"><rect x="1.5" y="3.5" width="11" height="9" fill="none" stroke="#fff" stroke-width="1.3"/><path d="M1.5 0.5V2M12.5 0.5V2M1.5 14V15.5M12.5 14V15.5" stroke="#fff" stroke-width="1.2"/><rect x="15" y="0" width="1.4" height="16" fill="#fff"/><rect x="14.3" y="4" width="2.8" height="3" fill="#fff"/></svg>
<svg class="r" style="left:158px;top:1048px" width="25" height="24" viewBox="0 0 25 24"><defs><linearGradient id="ieg" x1="0" y1="0" x2="0" y2="1"><stop offset="0" stop-color="#8ee0fb"/><stop offset="1" stop-color="#1e9fe0"/></linearGradient></defs><path fill-rule="evenodd" fill="url(#ieg)" d="M23.5 14.5H9.5C9.8 17 11.8 18.5 14.5 18.5C16.5 18.5 18.2 17.7 19.3 16.3H23.2C21.8 19.8 18.5 22 14.5 22C9 22 5 18 5 12.8C5 7.5 9 3.5 14.2 3.5C19.5 3.5 23.5 7.5 23.5 13ZM9.6 11.3H19C18.6 9 16.7 7.2 14.3 7.2C11.9 7.2 10 9 9.6 11.3Z"/><path d="M4.5 23C1.5 20.5 5.5 11 13 6C19.5 1.5 24.5 0.5 23.5 4.5" fill="none" stroke="#e9b712" stroke-width="1.6"/></svg>
<svg class="r" style="left:209px;top:1049px" width="22" height="22" viewBox="0 0 22 22"><path fill-rule="evenodd" fill="#0c78d4" d="M21 13H7.3C7.7 16 10 17.6 13 17.6C15.5 17.6 17.5 17 20 15.6V19.6C18 20.6 15.5 21.5 12.5 21.5C6 21.5 1.7 17.2 1.7 11.7C1.7 5.2 6.5 0.5 11.5 0.5C17 0.5 21 4.5 21 10.5ZM7.3 9.5H15C15 7 13.3 5.3 11.1 5.3C9 5.3 7.5 7 7.3 9.5Z"/><path d="M0.5 8.5C1.8 4 5.5 1.2 9.5 1.3C5.8 2.8 2.8 5.2 0.5 8.5Z" fill="#0c78d4"/></svg>
<svg class="r" style="left:257px;top:1050px" width="23" height="20" viewBox="0 0 23 20"><path d="M0.5 1H8L10 3H22.5V18.5H0.5Z" fill="#f3c74f"/><rect x="0.5" y="4" width="22" height="14.5" rx="1" fill="#fde39a"/><path d="M4.5 19V11H18.5V19H15V14.5H8V19Z" fill="#35a9e8"/></svg>
<svg class="r" style="left:306px;top:1049px" width="23" height="22" viewBox="0 0 23 22"><defs><linearGradient id="npg" x1="0" y1="0" x2="1" y2="0"><stop offset="0" stop-color="#2f7f97"/><stop offset="0.6" stop-color="#a9d7e3"/><stop offset="1" stop-color="#e8f4f7"/></linearGradient></defs><path d="M8 2L20 0.8L22.5 19L17 21.5Z" fill="#f0f0f0"/><path d="M21 1.5L22.8 18.5" stroke="#e6a817" stroke-width="1"/><path d="M0.5 16.5L8 2L20 0.8L17 21.5Z" fill="url(#npg)"/></svg>
<div class="r" style="left:343px;top:1040px;width:160px;height:40px;background:#37475a"></div>
<div class="r" style="left:343px;top:1078px;width:160px;height:2px;background:#99d1ff"></div>
<svg class="r" style="left:354px;top:1049px" width="22" height="22" viewBox="0 0 22 22"><circle cx="11" cy="11" r="11" fill="#db4437"/><path d="M11 11L1.5 5.5A11 11 0 0 0 6.5 21Z" fill="#0f9d58"/><path d="M11 11L6.5 21A11 11 0 0 0 22 11L20.5 5.5Z" fill="#ffcd40"/><path d="M11 5.5H20.5A11 11 0 0 1 22 11H16.5Z" fill="#ffcd40"/><circle cx="11" cy="11" r="5" fill="#fff"/><circle cx="11" cy="11" r="3.9" fill="#4285f4"/></svg>
<div class="t" style="left:381.5px;top:1053.67px;font-size:12.2px;color:#fff;font-weight:400;">keith@wingserv.co...</div>
<svg class="r" style="left:517px;top:1049px" width="22" height="21" viewBox="0 0 22 21"><path d="M11 1.5A9 8.5 0 1 1 6 17.5L1.5 19.5L3.5 15A9 8.5 0 0 1 11 1.5Z" fill="none" stroke="#f5a000" stroke-width="2.2"/><path d="M5 7.5L11 11.5L17 7.5" fill="none" stroke="#f5a000" stroke-width="2"/></svg>
<div class="r" style="left:557px;top:1078px;width:152px;height:2px;background:#99d1ff"></div>
<svg class="r" style="left:564px;top:1049px" width="22" height="21" viewBox="0 0 22 21"><path d="M11 1.5A9 8.5 0 1 1 6 17.5L1.5 19.5L3.5 15A9 8.5 0 0 1 11 1.5Z" fill="none" stroke="#f5a000" stroke-width="2.2"/><path d="M5 7.5L11 11.5L17 7.5" fill="none" stroke="#f5a000" stroke-width="2"/></svg>
<div class="t" style="left:591.5px;top:1053.67px;font-size:12.2px;color:#fff;font-weight:400;">eM Client</div>
<div class="r" style="left:717px;top:1078px;width:152px;height:2px;background:#99d1ff"></div>
<svg class="r" style="left:724px;top:1051px" width="22" height="18" viewBox="0 0 22 18"><rect x="0.8" y="0.8" width="20.4" height="16.4" fill="none" stroke="#fff" stroke-width="1.5"/><path d="M1 1L11 10L21 1M1 17L8 8.5M21 17L14 8.5" fill="none" stroke="#fff" stroke-width="1.3"/></svg>
<div class="t" style="left:751.5px;top:1053.67px;font-size:12.2px;color:#fff;font-weight:400;">Digest of Commun...</div>
<svg class="r" style="left:1713px;top:1056px" width="13" height="8" viewBox="0 0 13 8"><path d="M0.7 7.3L6.5 1.5L12.3 7.3" fill="none" stroke="#fff" stroke-width="1.3"/></svg>
<svg class="r" style="left:1735px;top:1051px" width="17" height="17" viewBox="0 0 17 17"><circle cx="8" cy="8" r="7.7" fill="#8bbf2d"/><text x="2" y="12" font-family="Liberation Sans" font-weight="700" font-size="10" fill="#335500">V</text><rect x="8.5" y="9" width="7.5" height="7" fill="#f2e34a"/><path d="M10 9V7.5A2.2 2.2 0 0 1 14.5 7.5V9" fill="none" stroke="#f2e34a" stroke-width="1.3"/></svg>
<svg class="r" style="left:1758px;top:1053px" width="18" height="15" viewBox="0 0 18 15"><rect x="4.5" y="0.8" width="12.5" height="9" fill="none" stroke="#fff" stroke-width="1.2"/><path d="M10.5 10V13M7 13.5H14" stroke="#fff" stroke-width="1.2"/><rect x="0.5" y="0.8" width="3" height="2.5" fill="none" stroke="#fff" stroke-width="1"/><path d="M2 3.5V13" stroke="#fff" stroke-width="1.1"/></svg>
<svg class="r" style="left:1782px;top:1053px" width="18" height="15" viewBox="0 0 18 15"><path d="M0.8 5H3.5L7.5 1V14L3.5 10H0.8Z" fill="none" stroke="#fff" stroke-width="1.1"/><path d="M10 5Q11.5 7.5 10 10M12.5 3Q15 7.5 12.5 12M15 1Q18.5 7.5 15 14" fill="none" stroke="#fff" stroke-width="1.1"/></svg>
<div class="t" style="left:1810px;top:1044.89px;font-size:12.3px;color:#fff;font-weight:400;">11:23 AM</div>
<div class="t" style="left:1809.5px;top:1062.59px;font-size:12.3px;color:#fff;font-weight:400;letter-spacing:-0.529px;">7/29/2019</div>
<svg class="r" style="left:1878px;top:1051px" width="28" height="27" viewBox="0 0 28 27"><path d="M1 1.5H17V14H7L3.5 17V14H1Z" fill="#fff"/><path d="M3.5 5H14.5M3.5 8H14.5M3.5 11H11" stroke="#0a1929" stroke-width="1.1"/><circle cx="17" cy="16.5" r="7.5" fill="#1f1f1f" stroke="#666" stroke-width="1.2"/><text x="14.2" y="21" font-family="Liberation Sans" font-size="11" font-weight="700" fill="#fff">1</text></svg>
<div class="r" style="left:1915px;top:1040px;width:1px;height:40px;background:#4d5a66"></div>
</body></html>
